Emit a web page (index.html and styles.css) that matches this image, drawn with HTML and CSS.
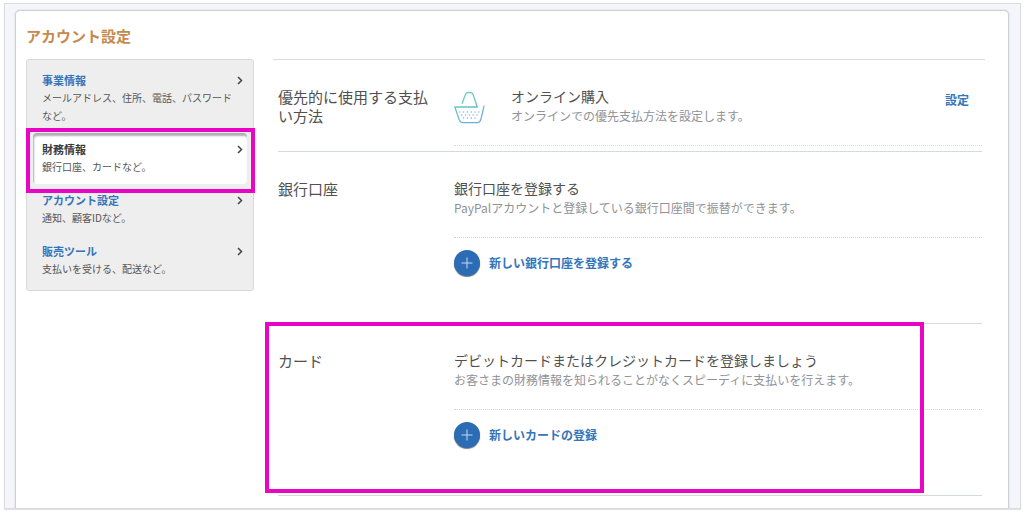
FILE: index.html
```html
<!DOCTYPE html>
<html lang="ja">

<head>
  <meta charset="utf-8">
  <meta name="viewport" content="width=device-width, initial-scale=1">
  <title>アカウント設定</title>
  <link rel="stylesheet" href="styles.css">
</head>

<body>
  <div class="frame">
    <div class="panel">
      <h1>アカウント設定</h1>
      <div class="columns">
        <nav class="side-nav">
          <a class="nav-item" href="#business">
            <span class="nav-title">事業情報</span>
            <svg class="chevron" viewBox="0 0 6 9"><path d="M1 1l3.5 3.5L1 8"/></svg>
            <span class="nav-desc">メールアドレス、住所、電話、パスワードなど。</span>
          </a>
          <a class="nav-item selected" href="#finance">
            <span class="nav-title">財務情報</span>
            <svg class="chevron" viewBox="0 0 6 9"><path d="M1 1l3.5 3.5L1 8"/></svg>
            <span class="nav-desc">銀行口座、カードなど。</span>
            <span class="marker nav-marker"></span>
          </a>
          <a class="nav-item" href="#account">
            <span class="nav-title">アカウント設定</span>
            <svg class="chevron" viewBox="0 0 6 9"><path d="M1 1l3.5 3.5L1 8"/></svg>
            <span class="nav-desc">通知、顧客IDなど。</span>
          </a>
          <a class="nav-item" href="#tools">
            <span class="nav-title">販売ツール</span>
            <svg class="chevron" viewBox="0 0 6 9"><path d="M1 1l3.5 3.5L1 8"/></svg>
            <span class="nav-desc">支払いを受ける、配送など。</span>
          </a>
        </nav>

        <main class="content">
          <section class="group preferred">
            <h2>優先的に使用する支払い方法</h2>
            <div class="group-body">
              <div class="row">
                <svg class="basket" viewBox="0 0 32 33">
                  <defs>
                    <linearGradient id="basket-line" gradientUnits="userSpaceOnUse" x1="8" y1="2" x2="24" y2="33">
                      <stop offset="0" stop-color="#6fd0b4"/>
                      <stop offset="0.5" stop-color="#62c0c6"/>
                      <stop offset="1" stop-color="#6aaade"/>
                    </linearGradient>
                  </defs>
                  <path d="M8.2 12.3L11.4 3.6Q12.2 1.5 14 1.5H16.6Q18.4 1.5 19.1 3.6L23.3 16H0.8L5.2 28.6Q6.2 31.6 8.8 31.6H23.2Q26 31.6 26.8 28.6L30 15.2" fill="none" stroke="url(#basket-line)" stroke-width="1.3" stroke-linecap="round" stroke-linejoin="round"/>
                  <g fill="none" stroke="url(#basket-line)" stroke-width="1.4" stroke-linecap="round" stroke-dasharray="0 3.8">
                    <path d="M5.8 21H26"/>
                    <path d="M7.7 24H24.5"/>
                    <path d="M9.6 27H22.5"/>
                  </g>
                </svg>
                <div class="row-text">
                  <h3>オンライン購入</h3>
                  <p>オンラインでの優先支払方法を設定します。</p>
                </div>
                <a class="set-link" href="#set">設定</a>
              </div>
            </div>
          </section>

          <section class="group">
            <h2>銀行口座</h2>
            <div class="group-body">
              <div class="row">
                <div class="row-text">
                  <h3>銀行口座を登録する</h3>
                  <p>PayPalアカウントと登録している銀行口座間で振替ができます。</p>
                </div>
              </div>
              <a class="add-link" href="#add-bank">
                <svg class="plus" viewBox="0 0 26 26"><path d="M13 7.5v11M7.5 13h11"/></svg>
                新しい銀行口座を登録する
              </a>
            </div>
          </section>

          <section class="group">
            <h2>カード</h2>
            <div class="group-body">
              <div class="row">
                <div class="row-text">
                  <h3>デビットカードまたはクレジットカードを登録しましょう</h3>
                  <p>お客さまの財務情報を知られることがなくスピーディに支払いを行えます。</p>
                </div>
              </div>
              <a class="add-link" href="#add-card">
                <svg class="plus" viewBox="0 0 26 26"><path d="M13 7.5v11M7.5 13h11"/></svg>
                新しいカードの登録
              </a>
            </div>
            <span class="marker card-marker"></span>
          </section>
        </main>
      </div>
    </div>
  </div>
</body>

</html>
```
FILE: styles.css
```css
* {
  box-sizing: border-box;
}

body, h1, h2, h3, p {
  margin: 0;
}

body {
  padding: 3px 3px 3px 4px;
  background: #fff;
  color: #505050;
  font-family: "Noto Sans CJK JP", sans-serif;
  font-size: 12px;
}

a {
  color: #3474ba;
  font-weight: bold;
  text-decoration: none;
}

.frame {
  padding: 6px 11px 0 10px;
  border: 1px solid #dcdcde;
  background: #f5f6fb;
  box-shadow: 0 1px 1px #e4e4e4;
}

.panel {
  padding: 13px 23px 12px 10px;
  border: 1px solid #cfd0d3;
  border-bottom: 0;
  border-radius: 5px 5px 0 0;
  background: #fff;
  box-shadow: 0 0 2px #ccc;
}

h1 {
  margin-bottom: 11px;
  color: #c58a4c;
  font-size: 15px;
  line-height: 24px;
}

.columns {
  display: flex;
  align-items: flex-start;
  gap: 19px;
}

/* side navigation */
.side-nav {
  flex: 0 0 228px;
  padding: 4px 6px;
  border: 1px solid #d8d8d8;
  border-radius: 3px;
  background: #eee;
}

.nav-item {
  position: relative;
  display: grid;
  grid-template-columns: 1fr auto;
  align-items: center;
  padding: 8px 4px 8px 9px;
}

.nav-title {
  font-size: 11px;
  line-height: 17px;
}

.nav-desc {
  color: #555;
  font-size: 10px;
  font-weight: normal;
  line-height: 18px;
}

.chevron {
  width: 6px;
  height: 9px;
  fill: none;
  stroke: #444;
  stroke-width: 1.5;
}

.selected {
  color: #3a3a3a;
  border-radius: 4px;
  background: #fff;
  box-shadow: inset 1px 3px 2px #b0b0b0;
}

/* content groups */
.content {
  flex: 1;
  min-width: 0;
  padding: 0 3px 0 5px;
  border-top: 1px solid #dcdcdc;
}

.group {
  position: relative;
  display: grid;
  grid-template-columns: 156px 1fr;
  column-gap: 20px;
  padding-bottom: 47px;
  border-bottom: 1px solid #d5dada;
}

.preferred {
  padding-bottom: 5px;
}

h2 {
  padding-top: 27px;
  font-size: 15px;
  font-weight: normal;
  line-height: 19px;
}

.group-body {
  padding-top: 26px;
}

.row {
  display: flex;
  align-items: flex-start;
  padding-bottom: 19px;
  border-bottom: 1px dotted #d8d8d8;
}

.row-text {
  flex: 1;
}

.row-text h3 {
  font-size: 14px;
  font-weight: normal;
  line-height: 20px;
}

.row-text p {
  color: #8f9296;
  line-height: 20px;
}

.basket {
  width: 32px;
  height: 33px;
  margin: 5px 25px 0 0;
}

.set-link {
  padding: 4px 13px 0 0;
  line-height: 20px;
}

.add-link {
  display: inline-flex;
  align-items: center;
  gap: 9px;
  margin-top: 12px;
  line-height: 26px;
  vertical-align: top;
}

.plus {
  width: 26px;
  height: 26px;
  border-radius: 50%;
  background: #2b6cb5;
  box-shadow: 0 1px 1px #777;
  fill: none;
  stroke: #c5d9ee;
}

/* highlight boxes */
.marker {
  position: absolute;
  border: 4px solid #e806c4;
  pointer-events: none;
}

.nav-marker {
  inset: -5px -8px -9px -7px;
  z-index: 1;
}

.card-marker {
  inset: -2px 58px 2px -13px;
}
```
